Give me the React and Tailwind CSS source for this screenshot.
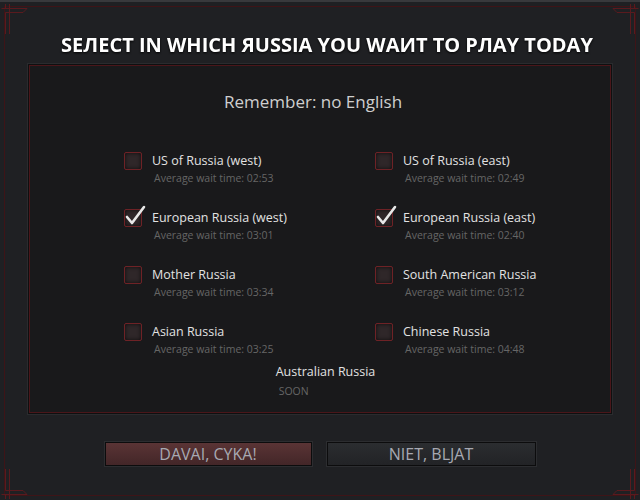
import React from "react";

const regions = [
  { name: "US of Russia (west)", wait: "02:53", checked: false },
  { name: "US of Russia (east)", wait: "02:49", checked: false },
  { name: "European Russia (west)", wait: "03:01", checked: true },
  { name: "European Russia (east)", wait: "02:40", checked: true },
  { name: "Mother Russia", wait: "03:34", checked: false },
  { name: "South American Russia", wait: "03:12", checked: false },
  { name: "Asian Russia", wait: "03:25", checked: false },
  { name: "Chinese Russia", wait: "04:48", checked: false },
];

const Corner = ({ className }) => (
  <svg width="30" height="30" viewBox="0 0 30 30" className={className} fill="none" stroke="#5a1a1e" strokeWidth="1">
    <path d="M0.5 4.5 H26 L22 8.5 H4.5 V30" />
    <path d="M4.5 0 V4.5" />
    <path d="M8.5 0 V30" />
  </svg>
);

const Checkbox = ({ checked }) => (
  <div className="relative w-[18px] h-[18px] shrink-0 rounded-[2px] border border-[#6e2226] bg-[#2f2729] shadow-[inset_0_0_4px_rgba(0,0,0,0.7)]">
    {checked && (
      <svg width="22" height="22" viewBox="0 0 22 22" className="absolute -left-[1px] -top-[6px]">
        <path d="M3 13 L8 19 L20 3" fill="none" stroke="#e8e8e8" strokeWidth="2.6" strokeLinecap="round" strokeLinejoin="round" />
      </svg>
    )}
  </div>
);

export default function App() {
  return (
    <div
      className="w-[640px] h-[500px] bg-[#1f2023] border-t-2 border-[#38393c] p-[4px] relative"
      style={{ fontFamily: '"Open Sans", "Noto Sans", sans-serif' }}
    >
      <Corner className="absolute left-[1px] top-[2px]" />
      <Corner className="absolute right-[1px] top-[2px] -scale-x-100" />
      <Corner className="absolute left-[1px] bottom-[1px] -scale-y-100" />
      <Corner className="absolute right-[1px] bottom-[1px] -scale-100" />
      <div className="h-full border border-[#3e1417] flex flex-col items-center">
        <h1 className="mt-[26px] ml-[14px] text-[20px] leading-[24px] font-bold text-white drop-shadow-[0_1px_1px_rgba(0,0,0,0.9)]">
          SEЛECT IN WHICH ЯUSSIA YOU WAИT TO PЛAY TODAY
        </h1>
        <div className="mt-[7px] w-[584px] h-[350px] border border-[#0f0f10] shadow-[0_0_0_1px_#2a2b2e]">
          <div className="h-full border border-[#4a161a] bg-[#19191b] flex flex-col items-center">
            <div className="mt-[24px] mr-[14px] text-[17px] leading-[24px] text-[#cfcfcf]">Remember: no English</div>
            <div className="mt-[38px] self-start pl-[94px] grid grid-cols-[251px_200px] gap-y-[24px]">
              {regions.map((r) => (
                <div key={r.name} className="flex items-start gap-[10px]">
                  <Checkbox checked={r.checked} />
                  <div className="-mt-[1px]">
                    <div className="text-[12.5px] leading-[20px] text-[#e2e2e2]">{r.name}</div>
                    <div className="pl-[2px] text-[10.5px] leading-[14px] text-[#666]">Average wait time: {r.wait}</div>
                  </div>
                </div>
              ))}
            </div>
            <div className="mt-[6px] ml-[11px]">
              <div className="text-[12.5px] leading-[20px] text-[#e2e2e2]">Australian Russia</div>
              <div className="mt-[2px] pl-[3px] text-[10.5px] leading-[14px] text-[#666]">SOON</div>
            </div>
          </div>
        </div>
        <div className="mt-[28px] flex gap-[15px]">
          <button className="w-[207px] h-[24px] border border-[#0c0c0d] bg-gradient-to-b from-[#5a3435] to-[#432628] text-[16px] leading-[22px] text-[#a7a9b2] shadow-[0_0_0_1px_#2c2d30]">
            DAVAI, CYKA!
          </button>
          <button className="w-[209px] h-[24px] border border-[#0c0c0d] bg-gradient-to-b from-[#2b2d30] to-[#222326] text-[16px] leading-[22px] text-[#a7a9b2] shadow-[0_0_0_1px_#2c2d30]">
            NIET, BLJAT
          </button>
        </div>
      </div>
    </div>
  );
}
